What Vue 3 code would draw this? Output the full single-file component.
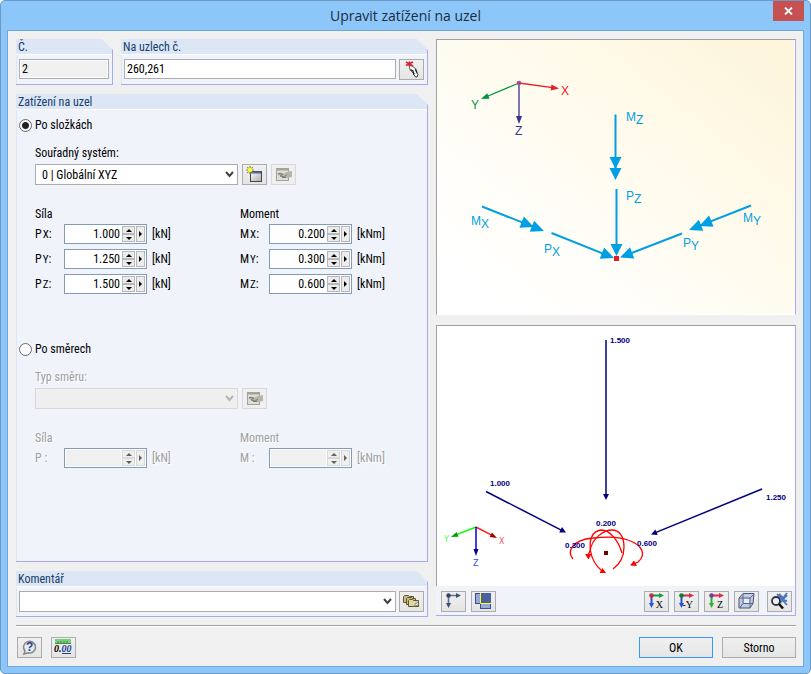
<script setup>
import { ref, reactive } from 'vue'

const mode = ref('components')
const nodes = ref('260,261')
const comment = ref('')

const forces = reactive([
  { id: 'px', base: 'P', axis: 'X', value: '1.000' },
  { id: 'py', base: 'P', axis: 'Y', value: '1.250' },
  { id: 'pz', base: 'P', axis: 'Z', value: '1.500' },
])
const moments = reactive([
  { id: 'mx', base: 'M', axis: 'X', value: '0.200' },
  { id: 'my', base: 'M', axis: 'Y', value: '0.300' },
  { id: 'mz', base: 'M', axis: 'Z', value: '0.600' },
])
const columns = [
  { title: 'Síla', unit: '[kN]', rows: forces },
  { title: 'Moment', unit: '[kNm]', rows: moments },
]
const directionColumns = [
  { id: 'dir-p', title: 'Síla', label: 'P :', unit: '[kN]' },
  { id: 'dir-m', title: 'Moment', label: 'M :', unit: '[kNm]' },
]

function step(row, delta) {
  row.value = (parseFloat(row.value || '0') + delta).toFixed(3)
}

// Triangle with its tip at (x, y), pointing along the direction (dx, dy)
function head(x, y, dx, dy, length, width) {
  const n = Math.hypot(dx, dy)
  const ux = dx / n
  const uy = dy / n
  const bx = x - ux * length
  const by = y - uy * length
  const h = width / 2
  return `${x},${y} ${bx - uy * h},${by + ux * h} ${bx + uy * h},${by - ux * h}`
}
function arrow(x1, y1, x2, y2, length, width, double = 0) {
  const dx = x2 - x1
  const dy = y2 - y1
  const n = Math.hypot(dx, dy)
  const heads = [head(x2, y2, dx, dy, length, width)]
  if (double) heads.push(head(x2 - (dx / n) * double, y2 - (dy / n) * double, dx, dy, length, width))
  return { x1, y1, x2: x2 - (dx / n) * length * 0.8, y2: y2 - (dy / n) * length * 0.8, heads }
}

const loadArrows = [
  arrow(615.5, 114.5, 615.5, 180, 12, 12, 11),
  arrow(616.5, 189, 616.5, 256, 12, 12),
  arrow(482, 206.5, 544, 231, 13, 12, 11),
  arrow(551.5, 233, 614, 258, 13, 12),
  arrow(682, 233.5, 620, 257.5, 13, 12),
  arrow(751, 205.5, 689, 230, 13, 12, 11),
]
const loadLabels = [
  { x: 626, y: 121, t: 'M', s: 'Z' },
  { x: 626, y: 200, t: 'P', s: 'Z' },
  { x: 471, y: 225, t: 'M', s: 'X' },
  { x: 544, y: 253, t: 'P', s: 'X' },
  { x: 683, y: 247, t: 'P', s: 'Y' },
  { x: 743, y: 222, t: 'M', s: 'Y' },
]
const axes = [
  { ...arrow(519, 83, 559, 88.5, 8, 6), color: '#e3202a', t: 'X', x: 561, y: 95 },
  { ...arrow(519, 83, 481, 99, 8, 6), color: '#00963f', t: 'Y', x: 471, y: 109 },
  { ...arrow(519, 83, 519, 124, 8, 6), color: '#3a308c', t: 'Z', x: 515, y: 135 },
]
const resultArrows = [
  arrow(606, 340, 606, 500, 6, 6),
  arrow(486, 491.5, 566, 532.5, 6, 6),
  arrow(762, 489, 651, 534.5, 6, 6),
]
const resultLabels = [
  { x: 610, y: 343, t: '1.500' },
  { x: 490, y: 486, t: '1.000' },
  { x: 766, y: 500, t: '1.250' },
  { x: 596, y: 526, t: '0.200' },
  { x: 565, y: 548, t: '0.300' },
  { x: 637, y: 546, t: '0.600' },
]
const miniAxes = [
  { ...arrow(476, 527, 451, 537, 7, 5), line: '#00ff00', fill: '#00a000', text: '#40ff40', t: 'Y', x: 444, y: 542 },
  { ...arrow(476, 527, 497, 538, 7, 5), line: '#ff2020', fill: '#a80000', text: '#ff5050', t: 'X', x: 499, y: 544 },
  { ...arrow(476, 527, 476, 556, 7, 5), line: '#0000d0', fill: '#0000a0', text: '#4040ff', t: 'Z', x: 473, y: 566 },
]
const views = [
  { t: 'X', right: '#1f9a3a', down: '#2a50d8', dot: '#c03040', name: 'Pohled ve směru X' },
  { t: '-Y', right: '#d03048', down: '#2a50d8', dot: '#157a2c', name: 'Pohled ve směru -Y' },
  { t: 'Z', right: '#d03048', down: '#28b428', dot: '#7040a0', name: 'Pohled ve směru Z' },
]
</script>

<template>
  <div class="window">
    <header class="titlebar">
      <h1>Upravit zatížení na uzel</h1>
      <button class="close" type="button" aria-label="Zavřít">
        <svg width="9" height="8" viewBox="0 0 9 8"><path d="M1 .5 8 7.5M8 .5 1 7.5" stroke="#fff" stroke-width="1.8" /></svg>
      </button>
    </header>

    <form class="client" @submit.prevent>
      <main class="main">
        <div class="left">
          <div class="top">
            <section class="group">
              <h2><label for="number">Č.</label></h2>
              <div class="bar"><input id="number" class="box" value="2" readonly /></div>
            </section>
            <section class="group">
              <h2><label for="nodes">Na uzlech č.</label></h2>
              <div class="bar">
                <input id="nodes" v-model="nodes" class="box" />
                <button class="tool" type="button" aria-label="Vybrat uzly">
                  <svg width="21" height="19" viewBox="0 0 21 19">
                    <path d="M8 4.500l6 3.500 2 5-3 1-4-4z" fill="#fff" stroke="#666" />
                    <path d="M9.500 9.500l2.500 1.500 1 4M14.500 9l1.500 4" stroke="#222" stroke-width="1.400" fill="none" />
                    <path d="M13 14.500l1.500 2.500h1.500l1-2.500-1.500-2" fill="#fff" stroke="#333" />
                    <path d="M5 2l7 4M5 5.500l7-3.500M8.500 1.500v5" stroke="#d02a35" stroke-width="1.600" />
                  </svg>
                </button>
              </div>
            </section>
          </div>

          <section class="group grow">
            <h2>Zatížení na uzel</h2>
            <div class="options">
              <div class="option">
                <label class="radio"><input v-model="mode" type="radio" name="mode" value="components" />Po složkách</label>
                <div class="content">
                  <label for="system">Souřadný systém:</label>
                  <div class="selectrow">
                    <div class="select">
                      <select id="system"><option>0 | Globální XYZ</option></select>
                      <svg width="9" height="7" viewBox="0 0 9 7"><path d="M1 1l3.500 4L8 1" fill="none" stroke="#444" stroke-width="2" /></svg>
                    </div>
                    <button class="tool" type="button" aria-label="Nový souřadný systém">
                      <svg width="21" height="19" viewBox="0 0 21 19">
                        <defs><linearGradient id="win" x1="0" y1="0" x2="1" y2="1"><stop offset="0" stop-color="#fff" /><stop offset="1" stop-color="#aaa" /></linearGradient></defs>
                        <rect x="6.500" y="6.500" width="11" height="10" fill="url(#win)" stroke="#444" />
                        <path d="M7 7.500h10" stroke="#4a64a8" stroke-width="2" />
                        <path d="M6 1v8M2 5h8M3.200 2.200l5.600 5.600M8.800 2.200L3.200 7.800" stroke="#8a8a20" stroke-width="1.200" />
                        <circle cx="6" cy="5" r="2.200" fill="#ffff40" />
                      </svg>
                    </button>
                    <button class="tool" type="button" disabled aria-label="Upravit souřadný systém">
                      <svg width="21" height="19" viewBox="0 0 21 19">
                        <rect x="3.500" y="3.500" width="12" height="12" fill="#deded6" stroke="#a3a39a" />
                        <path d="M3 4.500h13" stroke="#a3a39a" stroke-width="2" />
                        <path d="M4 9c2-2 4-2 6 0l4-2 5-1v6l-5 1-4-1-5-2z" fill="#b4b4a8" />
                        <path d="M5 8.500l5 .5-3 2 4 1 3-2M9 12.500h4" fill="none" stroke="#7d7d74" />
                      </svg>
                    </button>
                  </div>
                  <div class="columns">
                    <div v-for="c in columns" :key="c.title" class="column">
                      <h3>{{ c.title }}</h3>
                      <div v-for="r in c.rows" :key="r.id" class="row">
                        <label :for="r.id">{{ r.base }}<span class="axis">{{ r.axis }}</span>:</label>
                        <div class="number">
                          <input :id="r.id" v-model="r.value" />
                          <span class="spin">
                            <button type="button" aria-label="Zvýšit" @click="step(r, 0.1)"><svg width="6" height="3" viewBox="0 0 6 3"><path d="M0 3l3-3 3 3z" /></svg></button>
                            <button type="button" aria-label="Snížit" @click="step(r, -0.1)"><svg width="6" height="3" viewBox="0 0 6 3"><path d="M0 0l3 3 3-3z" /></svg></button>
                          </span>
                          <button type="button" class="more" aria-label="Možnosti"><svg width="3" height="6" viewBox="0 0 3 6"><path d="M0 0l3 3-3 3z" /></svg></button>
                        </div>
                        <span>{{ c.unit }}</span>
                      </div>
                    </div>
                  </div>
                </div>
              </div>

              <div class="option">
                <label class="radio"><input v-model="mode" type="radio" name="mode" value="direction" />Po směrech</label>
                <div class="content off">
                  <label for="direction">Typ směru:</label>
                  <div class="selectrow">
                    <div class="select">
                      <select id="direction" disabled></select>
                      <svg width="9" height="7" viewBox="0 0 9 7"><path d="M1 1l3.500 4L8 1" fill="none" stroke="#b4b4b4" stroke-width="2" /></svg>
                    </div>
                    <button class="tool" type="button" disabled aria-label="Upravit směr">
                      <svg width="21" height="19" viewBox="0 0 21 19">
                        <rect x="3.500" y="3.500" width="12" height="12" fill="#deded6" stroke="#a3a39a" />
                        <path d="M3 4.500h13" stroke="#a3a39a" stroke-width="2" />
                        <path d="M4 9c2-2 4-2 6 0l4-2 5-1v6l-5 1-4-1-5-2z" fill="#b4b4a8" />
                        <path d="M5 8.500l5 .5-3 2 4 1 3-2M9 12.500h4" fill="none" stroke="#7d7d74" />
                      </svg>
                    </button>
                  </div>
                  <div class="columns">
                    <div v-for="c in directionColumns" :key="c.id" class="column">
                      <h3>{{ c.title }}</h3>
                      <div class="row">
                        <label :for="c.id">{{ c.label }}</label>
                        <div class="number">
                          <input :id="c.id" disabled />
                          <span class="spin">
                            <button type="button" disabled aria-label="Zvýšit"><svg width="6" height="3" viewBox="0 0 6 3"><path d="M0 3l3-3 3 3z" /></svg></button>
                            <button type="button" disabled aria-label="Snížit"><svg width="6" height="3" viewBox="0 0 6 3"><path d="M0 0l3 3 3-3z" /></svg></button>
                          </span>
                          <button type="button" class="more" disabled aria-label="Možnosti"><svg width="3" height="6" viewBox="0 0 3 6"><path d="M0 0l3 3-3 3z" /></svg></button>
                        </div>
                        <span>{{ c.unit }}</span>
                      </div>
                    </div>
                  </div>
                </div>
              </div>
            </div>
          </section>

          <section class="group">
            <h2><label for="comment">Komentář</label></h2>
            <div class="bar">
              <div class="select">
                <select id="comment" v-model="comment"><option value=""></option></select>
                <svg width="9" height="7" viewBox="0 0 9 7"><path d="M1 1l3.500 4L8 1" fill="none" stroke="#444" stroke-width="2" /></svg>
              </div>
              <button class="tool" type="button" aria-label="Převzít komentář">
                <svg width="21" height="19" viewBox="0 0 21 19">
                  <g fill="#c9bd86" stroke="#5c5530">
                    <path d="M2.500 4.500l1-1h4l1 1h4v6h-10z" />
                    <path d="M5.500 6.500l1-1h4l1 1h3v6h-9z" />
                    <path d="M7.500 8.500l1-1h3l1 1h5v6h-10z" fill="#e0d6a4" />
                  </g>
                  <path d="M13.500 14.500l1-3 3-1v2z" fill="#fff" stroke="#5c5530" stroke-width=".7" />
                </svg>
              </button>
            </div>
          </section>
        </div>

        <div class="right">
          <figure class="canvas scheme">
            <svg viewBox="437 40 357 274" role="img" aria-label="Schéma zatížení na uzel">
              <g v-for="a in axes" :key="a.t" :stroke="a.color" :fill="a.color">
                <line :x1="a.x1" :y1="a.y1" :x2="a.x2" :y2="a.y2" stroke-width="1.300" />
                <polygon v-for="h in a.heads" :key="h" :points="h" stroke="none" />
                <text :x="a.x" :y="a.y" stroke="none">{{ a.t }}</text>
              </g>
              <circle cx="519" cy="83" r="2.300" fill="#a84a86" />
              <g stroke="#009fe3" fill="#009fe3">
                <g v-for="(a, i) in loadArrows" :key="i">
                  <line :x1="a.x1" :y1="a.y1" :x2="a.x2" :y2="a.y2" stroke-width="2" />
                  <polygon v-for="h in a.heads" :key="h" :points="h" stroke="none" />
                </g>
                <text v-for="l in loadLabels" :key="l.t + l.s" :x="l.x" :y="l.y" stroke="none">{{ l.t }}<tspan dy="3" class="sub">{{ l.s }}</tspan></text>
              </g>
              <rect x="614" y="256" width="5" height="5" fill="#e3202a" />
            </svg>
          </figure>

          <div>
            <figure class="canvas">
              <svg viewBox="437 326 357 260" role="img" aria-label="Náhled zatížení">
                <g fill="none" stroke="#f00" stroke-width="1.300">
                  <path d="M573 559C567 552 571 540 593 538C610 536 620 537 628 540C642 545 647 554 638 562L634 564" />
                  <path d="M622 553C618 540 610 530 601 530C592 531 589 540 590.500 551C592 560 596 566 602 571" />
                  <path d="M613 569C620 564 624 556 624 547C624 536 619 530 612 530C604 530 592 538 590 551L588 555" />
                </g>
                <path d="M606 573h-6.500l3-5zM585 554h6.500l-3 5.500zM630 565.500l4-5 3 5.500z" fill="#f00" />
                <g stroke="#00007f" fill="#00007f">
                  <g v-for="(a, i) in resultArrows" :key="i">
                    <line :x1="a.x1" :y1="a.y1" :x2="a.x2" :y2="a.y2" stroke-width="1.500" />
                    <polygon v-for="h in a.heads" :key="h" :points="h" stroke="none" />
                  </g>
                  <text v-for="l in resultLabels" :key="l.t" :x="l.x" :y="l.y" stroke="none" class="value">{{ l.t }}</text>
                </g>
                <rect x="604" y="551" width="4" height="4" fill="#700000" />
                <g v-for="a in miniAxes" :key="a.t">
                  <line :x1="a.x1" :y1="a.y1" :x2="a.x2" :y2="a.y2" :stroke="a.line" stroke-width="1.500" />
                  <polygon v-for="h in a.heads" :key="h" :points="h" :fill="a.fill" />
                  <text :x="a.x" :y="a.y" :fill="a.text" class="mini">{{ a.t }}</text>
                </g>
              </svg>
            </figure>
            <div class="toolbar">
              <button class="tool" type="button" aria-label="Osy">
                <svg width="21" height="19" viewBox="0 0 21 19">
                  <path d="M5 3.500h9M5.500 3v9" stroke="#5d70a0" stroke-width="1.600" fill="none" />
                  <path d="M13 1l5 2.500-5 2.500zM3 11h5l-2.500 5z" fill="#3d4f7c" /><circle cx="5.500" cy="3.500" r="2.200" fill="#33425f" />
                </svg>
              </button>
              <button class="tool" type="button" aria-label="Okna">
                <svg width="21" height="19" viewBox="0 0 21 19">
                  <rect x="2.500" y="1.500" width="6" height="10" fill="#98a8d8" stroke="#3c4f90" />
                  <rect x="7.500" y="11.500" width="10" height="5" fill="#98a8d8" stroke="#3c4f90" />
                  <rect x="8" y="1" width="10" height="11" fill="#4c5f9e" />
                  <path d="M7.500 1v10.500H18" stroke="#ffff20" fill="none" />
                </svg>
              </button>
              <span class="spacer"></span>
              <button v-for="v in views" :key="v.t" class="tool" type="button" :aria-label="v.name">
                <svg width="21" height="19" viewBox="0 0 21 19">
                  <path d="M5 3.500h9" :stroke="v.right" stroke-width="2" /><path d="M13 1l5 2.500-5 2.500z" :fill="v.right" />
                  <path d="M5.500 4v8" :stroke="v.down" stroke-width="2" /><path d="M3 11h5l-2.500 5z" :fill="v.down" />
                  <circle cx="5.500" cy="3.500" r="2.300" :fill="v.dot" />
                  <text x="17" y="16" text-anchor="end" class="view">{{ v.t }}</text>
                </svg>
              </button>
              <button class="tool" type="button" aria-label="Izometrický pohled">
                <svg width="21" height="19" viewBox="0 0 21 19">
                  <path d="M3 6l4-4.500h11l-1 10-3 4.500H3z" fill="#c0cce4" stroke="#4b5676" />
                  <path d="M3 6h11v10M14 6l4-4M7 2v9.500L3.500 16M7 11.500h10" fill="none" stroke="#5b6688" />
                  <path d="M8 7h5v4H8z" fill="#f2f5fb" opacity=".8" />
                </svg>
              </button>
              <button class="tool last" type="button" aria-label="Zobrazit vše">
                <svg width="21" height="19" viewBox="0 0 21 19">
                  <path d="M8 2l10 11M18 3l-7 8M10 2l4 4 4-5M13 8l5 1" stroke="#4a76c0" stroke-width="1.800" fill="none" />
                  <circle cx="7" cy="9" r="4" fill="#e8eefa" stroke="#333" stroke-width="1.800" />
                  <path d="M10 12l4 4.500" stroke="#111" stroke-width="2.500" />
                </svg>
              </button>
            </div>
          </div>
        </div>
      </main>

      <footer class="footer">
        <button class="tool" type="button" aria-label="Nápověda">
          <svg width="21" height="19" viewBox="0 0 21 19">
            <path d="M5 16l1-3a6 5.800 0 1 1 3 1.800z" fill="#e6eaf2" stroke="#888" stroke-width="1.500" />
            <text x="7" y="13" class="help">?</text>
          </svg>
        </button>
        <button class="tool" type="button" aria-label="Jednotky a desetinná místa">
          <svg width="21" height="19" viewBox="0 0 21 19">
            <rect x="2" y="1" width="16" height="5" fill="#7ccc7c" /><path d="M2 5.500h16M5 3v2M8 3v2M11 3v2M14 3v2" stroke="#3d8f45" />
            <text x="1" y="14" class="digits">0.<tspan fill="#24408e">00</tspan></text>
            <path d="M9 15.500h9" stroke="#24408e" />
          </svg>
        </button>
        <span class="spacer"></span>
        <button class="command default" type="submit">OK</button>
        <button class="command" type="button">Storno</button>
      </footer>
    </form>
  </div>
</template>

<style>
body {
  margin: 0;
  background: #fff;
}
</style>

<style scoped>
* {
  box-sizing: border-box;
}
.window {
  display: flex;
  flex-direction: column;
  min-height: 100vh;
  padding: 0 6px 6px;
  border: 1px solid #6b9ac6;
  border-radius: 5px;
  background: #8dc7fa;
  color: #000;
  font: 12px/16px "Roboto Condensed", "Open Sans Condensed", Lato, "Liberation Sans", sans-serif;
}
h1, h2, h3 {
  margin: 0;
  font: inherit;
}
button, input, select {
  margin: 0;
  padding: 0;
  border: 0;
  border-radius: 0;
  background: none;
  color: inherit;
  font: inherit;
  outline: 0;
}
svg {
  display: block;
}
.titlebar {
  display: grid;
  grid-template-columns: 31px 1fr 31px;
  height: 29px;
}
.titlebar h1 {
  grid-column: 2;
  color: #1c2c3c;
  font: 14px/29px "Open Sans", "Noto Sans", sans-serif;
  text-align: center;
}
.close {
  display: grid;
  place-items: center;
  height: 20px;
  background: #c75050;
}
.client {
  display: flex;
  flex: 1;
  flex-direction: column;
  padding: 8px 7px 8px 8px;
  border: 1px solid #6fa6dc;
  background: #f0f0f0;
}
.main {
  display: grid;
  flex: 1;
  grid-template-columns: 412fr 360fr;
  gap: 8px;
}
.left {
  display: flex;
  flex-direction: column;
  gap: 9px;
}
.top {
  display: grid;
  grid-template-columns: 97px 1fr;
  gap: 8px;
}
.group {
  display: flex;
  flex-direction: column;
  border: solid #a9a9ea;
  border-width: 0 1px 1px 0;
  background: linear-gradient(90deg, #dce6f5 1px, #f0f4fa 1px);
  clip-path: polygon(0 0, calc(100% - 11px) 0, 100% 11px, 100% 100%, 0 100%);
}
.group.grow {
  flex: 1;
}
.group h2 {
  height: 16px;
  padding-left: 2px;
  border-bottom: 1px solid #fff;
  background: #dce6f5;
  color: #14406e;
}
.bar {
  display: flex;
  gap: 3px;
  padding: 4px 3px;
}
.box {
  flex: 1;
  min-width: 0;
  height: 20px;
  padding: 0 2px;
  border: 1px solid #abadb3;
  background: #fff;
}
.box[readonly] {
  box-shadow: inset 0 0 0 1px #fff;
  background: #f0f0f0;
}
.tool {
  display: grid;
  flex: none;
  place-items: center;
  width: 25px;
  height: 21px;
  border: 1px solid #acacac;
  background: linear-gradient(#f0f0f0, #e5e5e5);
}
.tool:disabled {
  border-color: #d9d9d9;
  background: #efefef;
}
.options {
  display: flex;
  flex-direction: column;
  gap: 47px;
  padding: 7px 3px;
}
.option {
  display: flex;
  flex-direction: column;
  gap: 12px;
}
.radio {
  display: flex;
  align-items: center;
  gap: 3px;
}
.radio input {
  appearance: none;
  width: 13px;
  height: 13px;
  border: 1px solid #6a6a6a;
  border-radius: 50%;
  background: #fff;
}
.radio input:checked {
  background: radial-gradient(circle, #222 3px, #fff 4px);
}
.content {
  display: flex;
  flex-direction: column;
  gap: 3px;
  padding-left: 16px;
}
.off {
  color: #a0a0a0;
  text-shadow: 1px 1px #fff;
}
.selectrow {
  display: flex;
  gap: 4px;
}
.selectrow .select {
  flex: none;
  width: 203px;
}
.select {
  display: grid;
  flex: 1;
  align-items: center;
}
.select > * {
  grid-area: 1 / 1;
}
.select svg {
  justify-self: end;
  margin-right: 4px;
  pointer-events: none;
}
.select select {
  appearance: none;
  width: 100%;
  height: 21px;
  padding: 0 20px 0 6px;
  border: 1px solid #acacac;
  background: #fff;
}
.select select:disabled {
  border-color: #d9d9d9;
  background: #efefef;
  opacity: 1;
}
.columns {
  display: grid;
  grid-template-columns: 205px 1fr;
  padding-top: 18px;
}
.column {
  display: flex;
  flex-direction: column;
  gap: 5px;
}
.column h3 {
  height: 13px;
}
.row {
  display: grid;
  grid-template-columns: 29px 83px auto;
  align-items: center;
  justify-content: start;
}
.row > span {
  padding-left: 5px;
}
.axis {
  padding-left: 1px;
  font-size: 11px;
}
.number {
  display: flex;
  gap: 1px;
  height: 20px;
  padding: 1px;
  border: 1px solid #7f9db9;
  background: #fff;
}
.number input {
  flex: 1;
  min-width: 0;
  padding-right: 1px;
  text-align: right;
}
.number input:disabled {
  background: #f0f0f0;
}
.spin {
  display: flex;
  flex-direction: column;
}
.number button {
  display: grid;
  flex: 1;
  place-items: center;
  width: 13px;
  border: 1px solid #b8b8b8;
  background: #ececec;
}
.number .more {
  flex: none;
  width: 9px;
}
.number button:disabled {
  border-color: #d9d9d9;
  background: #efefef;
  color: #606060;
}
.number svg {
  fill: currentColor;
}
.right {
  display: flex;
  flex-direction: column;
  gap: 10px;
}
.canvas {
  margin: 0;
  border: 1px solid #a0a0a0;
  border-right-color: #a9a9ea;
  border-bottom: 0;
  padding-right: 1px;
  background: #fff;
}
.canvas svg {
  width: 100%;
  height: auto;
}
.scheme {
  border-bottom: 1px solid #fff;
}
.scheme svg {
  background: linear-gradient(38deg, #fff 10%, #fffdf5 40%, #fffaeb 60%, #fdf5dc 95%);
}
.scheme text {
  font: 12px "Liberation Sans", Arial, sans-serif;
}
.value {
  font: bold 8px "Liberation Sans", Arial, sans-serif;
}
.mini {
  font: 8px "DejaVu Sans", sans-serif;
}
.toolbar {
  display: flex;
  gap: 5px;
  padding: 5px 3px 3px 5px;
  border: solid #a9a9ea;
  border-width: 0 1px 1px 0;
  background: #f0f4fa;
}
.toolbar .last {
  margin-left: 3px;
}
.spacer {
  flex: 1;
}
.view {
  font: 10px "Liberation Serif", serif;
}
.help {
  font: bold 12px "Liberation Sans", sans-serif;
  fill: #2b3f8c;
}
.digits {
  font: italic bold 10px "Liberation Serif", serif;
}
.footer {
  display: flex;
  gap: 9px;
  margin-top: 8px;
  padding: 11px 0 0 1px;
  border-top: 1px solid #a0a0a0;
  box-shadow: inset 0 1px #fff;
}
.command {
  width: 74px;
  height: 21px;
  border: 1px solid #acacac;
  background: linear-gradient(#f0f0f0, #e5e5e5);
}
.command.default {
  border-color: #3399ff;
}
</style>
